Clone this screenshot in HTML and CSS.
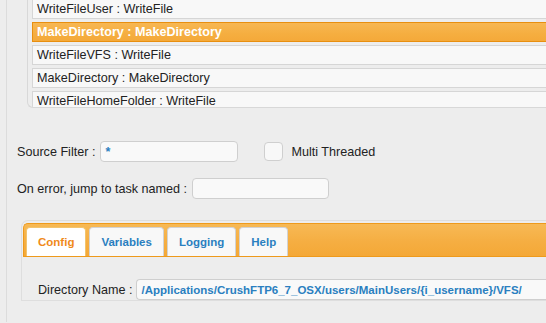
FILE: index.html
```html
<!DOCTYPE html>
<html lang="en">
<head>
<meta charset="UTF-8">
<title>Task Editor</title>
<link rel="stylesheet" href="styles.css">
</head>
<body>
<div class="page">
  <div class="task-list">
    <div class="task">WriteFileUser : WriteFile</div>
    <div class="task selected">MakeDirectory : MakeDirectory</div>
    <div class="task">WriteFileVFS : WriteFile</div>
    <div class="task">MakeDirectory : MakeDirectory</div>
    <div class="task">WriteFileHomeFolder : WriteFile</div>
  </div>

  <div class="form-row first">
    <label>Source Filter :</label>
    <div class="input filter">*</div>
    <span class="checkbox"></span>
    <label>Multi Threaded</label>
  </div>
  <div class="form-row">
    <label>On error, jump to task named :</label>
    <div class="input jump"></div>
  </div>

  <div class="tabs-panel">
    <div class="tab-bar">
      <div class="tab active">Config</div>
      <div class="tab">Variables</div>
      <div class="tab">Logging</div>
      <div class="tab">Help</div>
    </div>
    <div class="tab-body">
      <label>Directory Name :</label>
      <div class="input path">/Applications/CrushFTP6_7_OSX/users/MainUsers/{i_username}/VFS/</div>
    </div>
  </div>
</div>
</body>
</html>
```

FILE: styles.css
```css
html, body {
  margin: 0;
  padding: 0;
  background: #ededed;
  overflow: hidden;
}

body {
  font-family: "Liberation Sans", Arial, sans-serif;
  font-size: 12.6px;
  color: #222;
}

.page {
  height: 323px;
  margin-left: 6px;
  border-left: 1px solid #dcdcdc;
}

/* task list */
.task-list {
  margin-left: 20px;
  height: 108px;
  overflow: hidden;
  border-left: 1px solid #d8d8d8;
  border-bottom: 1px solid #d8d8d8;
  border-bottom-left-radius: 6px;
  padding: 0 0 0 4px;
  display: flex;
  flex-direction: column;
  gap: 3px;
  margin-top: -1px;
}

.task {
  flex-shrink: 0;
  height: 18px;
  line-height: 19px;
  background: #f8f8f8;
  border: 1px solid #d6d6d6;
  border-right: none;
  padding-left: 4px;
  white-space: nowrap;
}

.task.selected {
  background: linear-gradient(#f7b753, #f5ae40 60%, #f4a93a);
  border-color: #e88f10;
  color: #fff;
  font-weight: bold;
}

/* form rows */
.form-row {
  display: flex;
  align-items: center;
  padding-left: 10px;
  margin-top: 16px;
}

.form-row.first {
  margin-top: 33px;
}

.form-row label {
  margin-right: 5px;
  white-space: nowrap;
}

.input {
  height: 19px;
  line-height: 20px;
  background: #f9f9f9;
  border: 1px solid #cfcfcf;
  border-radius: 4px;
  padding-left: 4px;
  box-sizing: content-box;
  color: #2a7fc0;
  font-weight: bold;
  white-space: nowrap;
  overflow: hidden;
}

.input.filter {
  width: 132px;
}

.input.jump {
  width: 131px;
}

.checkbox {
  width: 17px;
  height: 17px;
  margin-left: 26px;
  margin-right: 8px;
  background: #f8f8f8;
  border: 1px solid #cfcfcf;
  border-radius: 4px;
}

/* tabs */
.tabs-panel {
  margin: 21px 0 0 14px;
  border: 1px solid #dedede;
  border-right: none;
  border-radius: 7px 0 0 0;
  padding: 2px 0 0 1px;
}

.tab-bar {
  display: flex;
  gap: 3px;
  height: 29px;
  padding: 3px 0 0 2px;
  background: linear-gradient(#f7b955, #f5ae42 55%, #f4a837);
  border: 1px solid #ee9a1c;
  border-right: none;
  border-radius: 5px 0 0 0;
}

.tab {
  padding: 0 11px;
  line-height: 29px;
  font-size: 11.5px;
  background: #f8f8f8;
  border: 1px solid #d2d2d2;
  border-bottom: none;
  border-radius: 4px 4px 0 0;
  color: #2a7fc0;
  font-weight: bold;
}

.tab.active {
  background: #fff;
  color: #f08a1a;
  border-color: #f2c46e;
}

.tab-body {
  display: flex;
  align-items: center;
  padding: 22px 0 0 15px;
}

.tab-body label {
  margin-right: 4px;
  white-space: nowrap;
}

.input.path {
  flex: 1;
  min-width: 0;
  font-size: 11.5px;
  border-right: none;
  border-radius: 4px 0 0 4px;
}
```
